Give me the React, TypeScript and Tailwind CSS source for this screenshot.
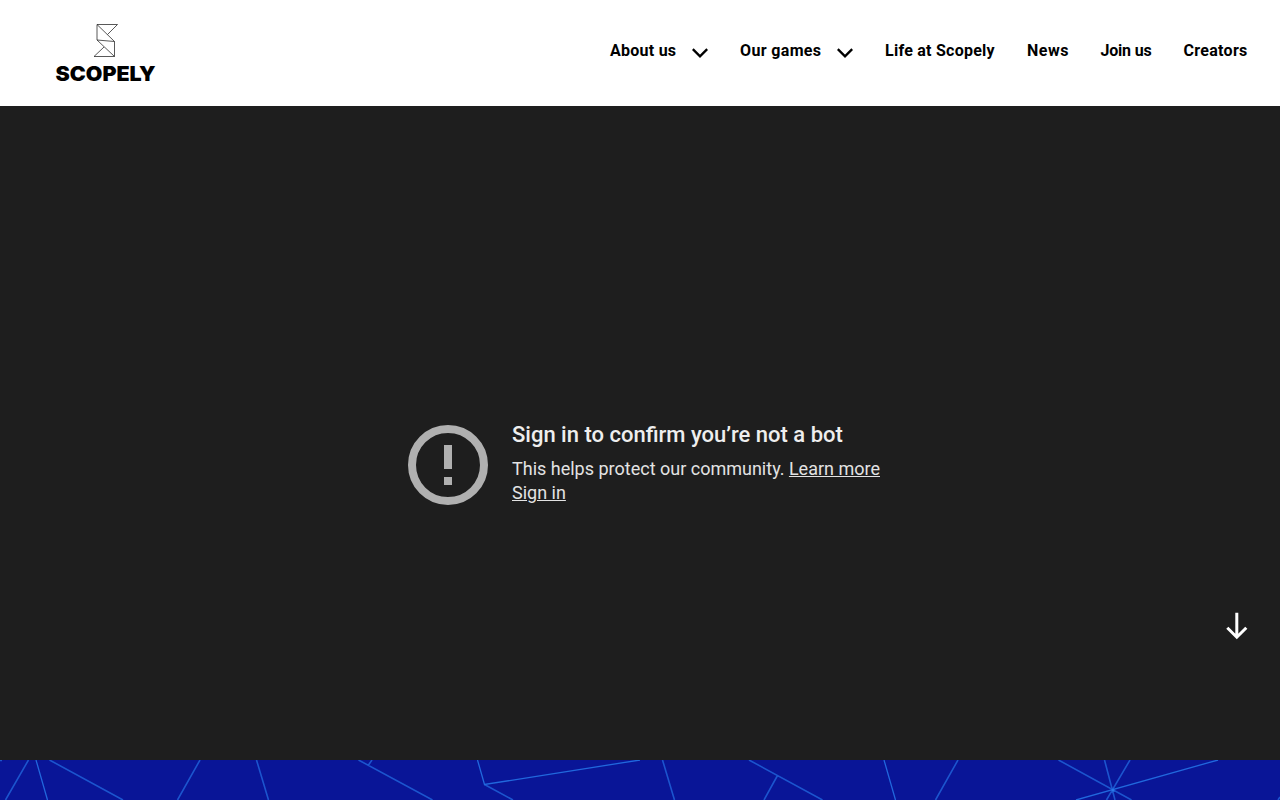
const navItems = [
  { label: "About us", width: "w-[66px]", spacing: "tracking-[0.25px]", menu: true },
  { label: "Our games", width: "w-[81px]", spacing: "tracking-[0.35px]", menu: true },
  { label: "Life at Scopely", width: "w-[110px]", spacing: "tracking-[0.25px]", menu: false },
  { label: "News", width: "w-[41.5px]", spacing: "tracking-[0.5px]", menu: false },
  { label: "Join us", width: "w-[51px]", spacing: "tracking-[-0.2px]", menu: false },
  { label: "Creators", width: "w-[64.5px]", spacing: "tracking-[0.3px]", menu: false },
];

function Logo() {
  return (
    <svg className="overflow-visible" width="104" height="64" viewBox="54 23 104 64" role="img" aria-label="Scopely">
      <g fill="none" stroke="#222" strokeWidth="0.75" strokeLinejoin="round">
        <path d="M97 24.5H117.5L107.5 34.5M97 24.5V40L114.5 41.5V56.5H94L104 47" />
        <path d="M97 24.5L114.5 41.5M97 40L114.5 56.5" />
      </g>
      <text
        x="55.5"
        y="80.5"
        textLength="100"
        lengthAdjust="spacingAndGlyphs"
        className="fill-black font-['Inter',sans-serif] text-[20px] font-black"
      >
        SCOPELY
      </text>
    </svg>
  );
}

function Header() {
  return (
    <header className="flex h-[106px] shrink-0 items-start justify-between bg-white pl-[54px] pr-8">
      <a href="#" className="mt-[23px]">
        <Logo />
      </a>
      <nav className="mt-[39px] flex gap-8 font-['Roboto',sans-serif] text-base font-bold text-black">
        {navItems.map((item) => (
          <a key={item.label} href="#" className="flex gap-4">
            <span className={`whitespace-nowrap ${item.width} ${item.spacing}`}>{item.label}</span>
            {item.menu && (
              <svg className="mt-[9px]" width="16" height="10" viewBox="0 0 16 10" fill="none" stroke="#000" strokeWidth="2.4">
                <path d="M0.8 1.1L8 8.3L15.2 1.1" />
              </svg>
            )}
          </a>
        ))}
      </nav>
    </header>
  );
}

function VideoNotice() {
  return (
    <main className="relative h-[654px] shrink-0 bg-[#1e1e1e] pl-[408px] pt-[315px] font-['Roboto',sans-serif]">
      <div className="flex gap-6">
        <svg className="mt-1 shrink-0" width="80" height="80" viewBox="0 0 80 80">
          <circle cx="40" cy="40" r="36" fill="none" stroke="#b0b0b0" strokeWidth="8" />
          <path d="M36 20h8v24h-8zM36 52h8v8h-8z" fill="#b0b0b0" />
        </svg>
        <div className="whitespace-nowrap text-[18px] leading-6 text-[#e3e3e3]">
          <h1 className="mb-2 text-[22px] font-medium leading-7 text-[#eeeeee]">Sign in to confirm you’re not a bot</h1>
          <p>
            This helps protect our community. <a href="#" className="underline">Learn more</a>
          </p>
          <a href="#" className="underline">Sign in</a>
        </div>
      </div>
      <a href="#next" aria-label="Scroll down" className="absolute right-8 top-[506px]">
        <svg width="22" height="28" viewBox="0 0 22 28" fill="none" stroke="#fff" strokeWidth="3">
          <path d="M10.8 0.7V25M1.3 15.8L10.8 25.2L20.3 15.8" />
        </svg>
      </a>
    </main>
  );
}

function PatternBand() {
  return (
    <section id="next" className="h-10 shrink-0 bg-[#091597]">
      <svg className="block" width="1280" height="40" viewBox="0 0 1280 40" fill="none">
        <g stroke="#1c55ce" strokeWidth="1.6">
          <path d="M0 0.5H2M28.5 0L5.5 40M49.5 0L123 40M200 0L177.5 40M256.5 0L268.5 40M358.5 0L432.5 40M372 0L368.5 5M484.5 24.5L513 40M662.5 0L674.5 40M749 0L822.5 40M777.5 15.5L764 40M958 0L935.5 40M1058.5 0L1131.5 40M1104.5 0L1115 40M1130 0L1106.5 40M1278 40L1280 37" />
        </g>
        <g stroke="#2168dd" strokeWidth="1.3">
          <path d="M36 0L47.5 40M477.5 0L484.5 24.5L640 0M884 0L895.5 40M1076 40L1218 0" />
        </g>
        <circle cx="1113" cy="30" r="1.5" fill="#2878e8" />
      </svg>
    </section>
  );
}

export default function App() {
  return (
    <div className="flex h-screen flex-col overflow-hidden bg-[#1e1e1e]">
      <Header />
      <VideoNotice />
      <PatternBand />
    </div>
  );
}
